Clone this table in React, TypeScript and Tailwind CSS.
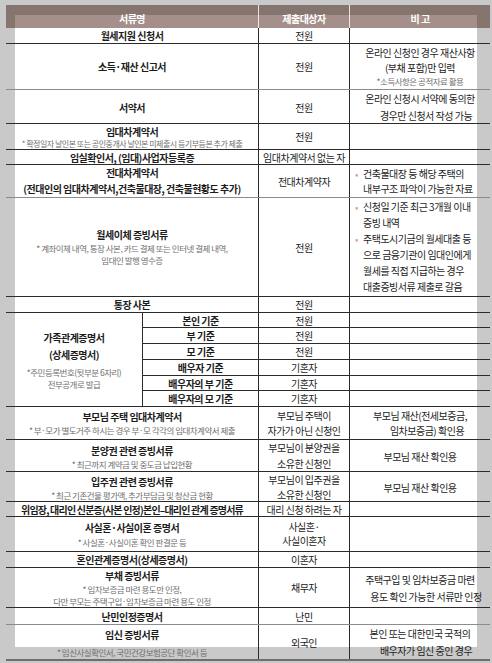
import React from 'react';

type RowProps = {
  h: string;
  line?: string;
  c1: React.ReactNode;
  c2?: React.ReactNode;
  c3?: React.ReactNode;
};

const Title = ({ children, lh = 'leading-[15px]' }: { children: React.ReactNode; lh?: string }) => (
  <p className={`font-bold whitespace-nowrap ${lh}`}>{children}</p>
);

const Note = ({ children }: { children: React.ReactNode }) => (
  <p className="text-[8.5px] leading-[12px] text-[#6f6f6f] whitespace-nowrap">{children}</p>
);

// one table row: 서류명 / 제출대상자 / 비고
const Row = ({ h, line = 'border-[#2b2b2b]', c1, c2, c3 }: RowProps) => (
  <div className={`grid grid-cols-[253px_91px_140px] border-b ${line} ${h}`}>
    <div className="flex flex-col items-center justify-center border-r border-[#2b2b2b] text-center">{c1}</div>
    <div className="flex flex-col items-center justify-center border-r border-[#2b2b2b] text-center">{c2}</div>
    <div className="flex flex-col items-center justify-center text-center">{c3}</div>
  </div>
);

const Bullet = ({ children }: { children: React.ReactNode }) => (
  <div className="flex">
    <span className="w-[8px] shrink-0 text-[#c7a199]">•</span>
    <span>{children}</span>
  </div>
);

const family: [string, string, string][] = [
  ['본인 기준', '전원', 'h-[15px]'],
  ['부 기준', '전원', 'h-[16px]'],
  ['모 기준', '전원', 'h-[16px]'],
  ['배우자 기준', '기혼자', 'h-[16px]'],
  ['배우자의 부 기준', '기혼자', 'h-[15px]'],
  ['배우자의 모 기준', '기혼자', 'flex-1'],
];

export default function App() {
  return (
    <div className="w-[492px] h-[663px] overflow-hidden bg-[#c9c9c9] bg-[linear-gradient(#ffffff,#ffffff)] bg-[length:462px_619px] bg-[position:15px_28px] bg-no-repeat pt-[5px] pl-[6px] font-['Noto_Sans_CJK_KR','Noto_Sans',sans-serif] text-[10px] tracking-[-0.05em] text-[#1c1c1c]">
      <div className="w-[484px]">
        {/* 헤더 */}
        <div className="grid h-[23px] grid-cols-[253px_91px_140px] bg-[#86756f] bg-[linear-gradient(#a48f8a,#a48f8a)] bg-[length:462px_13px] bg-[position:9px_10px] bg-no-repeat font-bold text-white">
          <div className="flex items-center justify-center border-r border-white/80 pt-[3px]">서류명</div>
          <div className="flex items-center justify-center border-r border-white/80 pt-[3px]">제출대상자</div>
          <div className="flex items-center justify-center pt-[3px]">비 고</div>
        </div>

        <Row h="h-[16px]" c1={<Title>월세지원 신청서</Title>} c2="전원" />
        <Row
          h="h-[46px]"
          line="border-[#8c8c8c]"
          c1={<Title>소득·재산 신고서</Title>}
          c2="전원"
          c3={
            <div className="leading-[15px]">
              <p>온라인 신청인 경우 재산사항</p>
              <p>(부채 포함)만 입력</p>
              <p className="text-[8.5px] leading-[13px] text-[#6f6f6f]">*소득사항은 공적자료 활용</p>
            </div>
          }
        />
        <Row
          h="h-[34px]"
          c1={<Title>서약서</Title>}
          c2="전원"
          c3={
            <div className="leading-[17px]">
              <p>온라인 신청시 서약에 동의한</p>
              <p className="pl-[12px]">경우만 신청서 작성 가능</p>
            </div>
          }
        />
        <Row
          h="h-[26px]"
          c1={
            <>
              <Title lh="leading-[13px]">임대차계약서</Title>
              <p className="text-[8px] leading-[11px] text-[#6f6f6f] whitespace-nowrap">
                * 확정일자 날인본 또는 공인중개사 날인본 미제출시 등기부등본 추가 제출
              </p>
            </>
          }
          c2="전원"
        />
        <Row h="h-[15px]" c1={<Title>임실확인서, (임대)사업자등록증</Title>} c2={<span className="whitespace-nowrap">임대차계약서 없는 자</span>} />
        <Row
          h="h-[33px]"
          line="border-[#8c8c8c]"
          c1={
            <div className="leading-[16px]">
              <Title lh="leading-[16px]">전대차계약서</Title>
              <Title lh="leading-[16px]">(전대인의 임대차계약서,건축물대장, 건축물현황도 추가)</Title>
            </div>
          }
          c2="전대차계약자"
          c3={
            <div className="w-full pl-[5px] text-left leading-[15px]">
              <Bullet>
                건축물대장 등 해당 주택의
                <br />
                내부구조 파악이 가능한 자료
              </Bullet>
            </div>
          }
        />
        <Row
          h="h-[99px]"
          c1={
            <>
              <Title lh="leading-[14px]">월세이체 증빙서류</Title>
              <Note>* 계좌이체 내역, 통장 사본, 카드 결제 또는 인터넷 결제 내역,</Note>
              <Note>임대인 발행 영수증</Note>
            </>
          }
          c2="전원"
          c3={
            <div className="w-full pl-[5px] text-left leading-[16px]">
              <Bullet>
                신청일 기준 최근 3개월 이내
                <br />
                증빙 내역
              </Bullet>
              <Bullet>
                주택도시기금의 월세대출 등
                <br />
                으로 금융기관이 임대인에게
                <br />
                월세를 직접 지급하는 경우
                <br />
                대출증빙서류 제출로 갈음
              </Bullet>
            </div>
          }
        />
        <Row h="h-[16px]" c1={<Title>통장 사본</Title>} c2="전원" />

        {/* 가족관계증명서 */}
        <div className="grid h-[94px] grid-cols-[137px_347px] border-b border-[#2b2b2b]">
          <div className="flex flex-col items-center justify-center border-r border-[#2b2b2b] text-center">
            <Title lh="leading-[17px]">가족관계증명서</Title>
            <Title lh="leading-[17px]">(상세증명서)</Title>
            <div className="mt-[3px]">
              <Note>*주민등록번호(뒷부분 6자리)</Note>
              <Note>전부공개로 발급</Note>
            </div>
          </div>
          <div className="flex flex-col">
            {family.map(([label, who, h], i) => (
              <div
                key={label}
                className={`grid grid-cols-[116px_91px_140px] ${i < 5 ? 'border-b border-[#2b2b2b]' : ''} ${h}`}
              >
                <div className="flex items-center justify-center border-r border-[#2b2b2b] font-bold">{label}</div>
                <div className="flex items-center justify-center border-r border-[#2b2b2b]">{who}</div>
                <div />
              </div>
            ))}
          </div>
        </div>

        <Row
          h="h-[33px]"
          c1={
            <>
              <Title lh="leading-[14px]">부모님 주택 임대차계약서</Title>
              <Note>* 부·모가 별도거주 하시는 경우 부·모 각각의 임대차계약서 제출</Note>
            </>
          }
          c2={
            <div className="leading-[15px]">
              <p>부모님 주택이</p>
              <p className="whitespace-nowrap">자가가 아닌 신청인</p>
            </div>
          }
          c3={
            <div className="leading-[15px]">
              <p>부모님 재산(전세보증금,</p>
              <p className="pl-[14px]">임차보증금) 확인용</p>
            </div>
          }
        />
        <Row
          h="h-[32px]"
          c1={
            <>
              <Title lh="leading-[15px]">분양권 관련 증빙서류</Title>
              <Note>* 최근까지 계약금 및 중도금 납입현황</Note>
            </>
          }
          c2={
            <div className="leading-[16px]">
              <p>부모님이 분양권을</p>
              <p>소유한 신청인</p>
            </div>
          }
          c3="부모님 재산 확인용"
        />
        <Row
          h="h-[30px]"
          c1={
            <>
              <Title lh="leading-[15px]">입주권 관련 증빙서류</Title>
              <Note>* 최근 기존건물 평가액, 추가부담금 및 청산금 현황</Note>
            </>
          }
          c2={
            <div className="leading-[15px]">
              <p>부모님이 입주권을</p>
              <p>소유한 신청인</p>
            </div>
          }
          c3="부모님 재산 확인용"
        />
        <Row
          h="h-[15px]"
          c1={<p className="font-bold whitespace-nowrap tracking-[-0.08em]">위임장, 대리인 신분증(사본 인정)본인–대리인 관계 증명서류</p>}
          c2={<span className="whitespace-nowrap">대리 신청 하려는 자</span>}
        />
        <Row
          h="h-[35px]"
          c1={
            <>
              <Title lh="leading-[16px]">사실혼·사실이혼 증명서</Title>
              <Note>* 사실혼·사실이혼 확인 판결문 등</Note>
            </>
          }
          c2={
            <div className="leading-[14px]">
              <p>사실혼·</p>
              <p>사실이혼자</p>
            </div>
          }
        />
        <Row h="h-[16px]" c1={<Title>혼인관계증명서(상세증명서)</Title>} c2="이혼자" />
        <Row
          h="h-[40px]"
          c1={
            <>
              <Title lh="leading-[14px]">부채 증빙서류</Title>
              <Note>* 임차보증금 마련 용도만 인정,</Note>
              <Note>다만 부모는 주택구입·임차보증금 마련 용도 인정</Note>
            </>
          }
          c2="채무자"
          c3={
            <div className="leading-[17px]">
              <p>주택구입 및 임차보증금 마련</p>
              <p className="pl-[12px] whitespace-nowrap">용도 확인 가능한 서류만 인정</p>
            </div>
          }
        />
        <Row h="h-[17px]" line="border-[#8c8c8c]" c1={<Title>난민인정증명서</Title>} c2="난민" />
        <Row
          h="h-[36px]"
          line="border-b-2 border-[#6e6e6e]"
          c1={
            <div className="flex flex-col items-center gap-[4px]">
              <Title>임신 증빙서류</Title>
              <Note>* 임신사실확인서, 국민건강보험공단 확인서 등</Note>
            </div>
          }
          c2="외국인"
          c3={
            <div className="leading-[17px]">
              <p>본인 또는 대한민국 국적의</p>
              <p className="pl-[12px]">배우자가 임신 중인 경우</p>
            </div>
          }
        />
      </div>
    </div>
  );
}
